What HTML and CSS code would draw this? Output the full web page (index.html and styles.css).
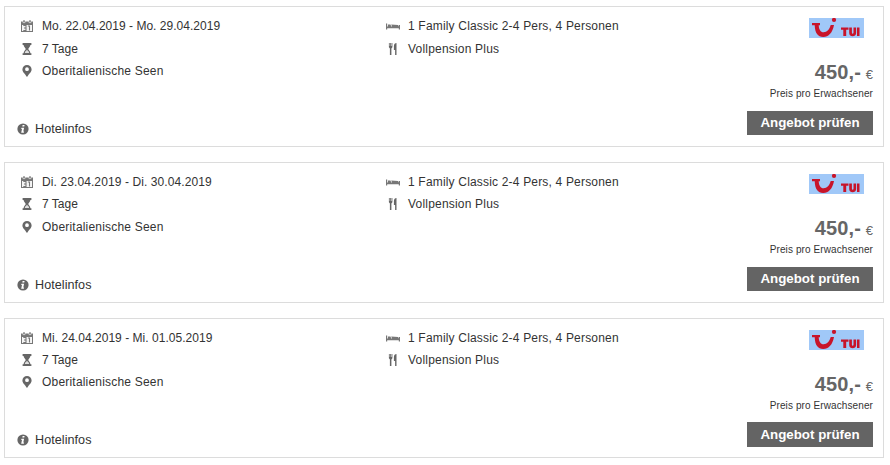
FILE: index.html
```html
<!DOCTYPE html>
<html lang="de">
<head>
<meta charset="utf-8">
<title>Angebote</title>
<link rel="stylesheet" href="styles.css">
</head>
<body>
<svg class="defs" width="0" height="0">
  <symbol id="calendar" viewBox="0 0 12 12"><path d="M0 1.500h12V12H0z" fill="#777"/><path d="M1 5h10v6H1z" fill="#f5f5f5"/><path d="M2 0h2v2.600H2zM8 0h2v2.600H8z" stroke="#fff" stroke-width=".6"/><path d="M2.300 5.500h2.700v5H2.300M3 8h2M6.900 6h1.600V10.500" fill="none" stroke="#777" stroke-width="1.100"/></symbol>
  <symbol id="hourglass" viewBox="0 0 10 12"><path d="M.6 0h8.800v2H.6zM.6 10.200h8.800V12H.6z"/><path d="M1.500 1.500h7C8.500 4 6.300 5 6.300 6S8.500 8 8.500 11h-7C1.500 8 3.700 7 3.700 6S1.500 4 1.500 1.500z"/><path d="M2.800 9.900C3 8.200 4.400 7.800 5 6.800c.6 1 2 1.400 2.200 3.100z" fill="#ddd"/></symbol>
  <symbol id="pin" viewBox="0 0 10 12"><path fill-rule="evenodd" d="M5 0a4.600 4.400 0 0 1 4.600 4.400C9.600 7 7 8.500 5 12 3 8.500.4 7 .4 4.400A4.600 4.400 0 0 1 5 0zm0 2.300a1.900 1.900 0 1 0 0 3.800 1.900 1.900 0 0 0 0-3.800z"/></symbol>
  <symbol id="bed" viewBox="0 0 14 7"><path d="M0 .5h1.200v2.900h11.600V2H14v4.500h-1.200V5.300H1.200v1.200H0zM2 1.500h2.500l.7 1.900H2zM5.200 1.500l6.800.4.700 1.500H6z" fill="#777"/></symbol>
  <symbol id="cutlery" viewBox="0 0 9 12"><path d="M.4 0h.8v3h.5V0h.8v3H3V0h.9v4.200L2.900 5.400V12H1.400V5.400L.4 4.200zM8 0v12H6.600V7H5.400V3C5.400 1 6.600 0 8 0z"/></symbol>
  <symbol id="info" viewBox="0 0 12 12"><circle cx="6" cy="6" r="5.600"/><path d="M5.600 2h2l-.3 1.500h-2zM4.500 4.700h2.600L6.300 8.500h.8l-.3 1.200H4.200L5 5.900h-.8z" fill="#fff"/></symbol>
  <symbol id="tui" viewBox="0 0 55 20"><path fill="#a0c8f8" d="M0 0h55v20H0z"/><g fill="#c8142a"><circle cx="25" cy="1.900" r="2.100"/><path d="M3 4.900h8v2.400H9.700c.2 4.300 1.800 7 4.900 7 3.500 0 5.900-2.800 7.100-3.700H25C23.600 14.800 19.700 19 14.200 19 8.900 19 6 15.200 5.700 7.300H3z" class="smile"/><path d="M32 9.500h7.500v2.300h-2.300V18h-2.900v-6.200H32zM40.200 9.500h2.700v5.200c0 1.400 1.600 1.400 1.600 0V9.500h2.600v5.400c0 4.400-6.900 4.400-6.900 0zM48 9.500h2.500V18H48z"/></g></symbol>
</svg>
<main class="offers">
  <article class="offer first">
    <section class="trip">
      <p class="row"><svg class="icon calendar"><use href="#calendar"/></svg><span class="date">Mo. 22.04.2019 - Mo. 29.04.2019</span></p>
      <p class="row"><svg class="icon"><use href="#hourglass"/></svg><span>7 Tage</span></p>
      <p class="row"><svg class="icon"><use href="#pin"/></svg><span class="place">Oberitalienische Seen</span></p>
      <a class="hotel"><svg class="info"><use href="#info"/></svg><span>Hotelinfos</span></a>
    </section>
    <section class="stay">
      <p class="row"><svg class="icon bed"><use href="#bed"/></svg><span class="room">1 Family Classic 2-4 Pers, 4 Personen</span></p>
      <p class="row"><svg class="icon"><use href="#cutlery"/></svg><span class="board">Vollpension Plus</span></p>
    </section>
    <section class="booking">
      <svg class="logo"><use href="#tui"/></svg>
      <p class="price"><b>450,-</b> <span>€</span></p>
      <p class="note">Preis pro Erwachsener</p>
      <a class="button"><span>Angebot prüfen</span></a>
    </section>
  </article>
  <article class="offer middle">
    <section class="trip">
      <p class="row"><svg class="icon calendar"><use href="#calendar"/></svg><span class="date">Di. 23.04.2019 - Di. 30.04.2019</span></p>
      <p class="row"><svg class="icon"><use href="#hourglass"/></svg><span>7 Tage</span></p>
      <p class="row"><svg class="icon"><use href="#pin"/></svg><span class="place">Oberitalienische Seen</span></p>
      <a class="hotel"><svg class="info"><use href="#info"/></svg><span>Hotelinfos</span></a>
    </section>
    <section class="stay">
      <p class="row"><svg class="icon bed"><use href="#bed"/></svg><span class="room">1 Family Classic 2-4 Pers, 4 Personen</span></p>
      <p class="row"><svg class="icon"><use href="#cutlery"/></svg><span class="board">Vollpension Plus</span></p>
    </section>
    <section class="booking">
      <svg class="logo"><use href="#tui"/></svg>
      <p class="price"><b>450,-</b> <span>€</span></p>
      <p class="note">Preis pro Erwachsener</p>
      <a class="button"><span>Angebot prüfen</span></a>
    </section>
  </article>
  <article class="offer last">
    <section class="trip">
      <p class="row"><svg class="icon calendar"><use href="#calendar"/></svg><span class="date">Mi. 24.04.2019 - Mi. 01.05.2019</span></p>
      <p class="row"><svg class="icon"><use href="#hourglass"/></svg><span>7 Tage</span></p>
      <p class="row"><svg class="icon"><use href="#pin"/></svg><span class="place">Oberitalienische Seen</span></p>
      <a class="hotel"><svg class="info"><use href="#info"/></svg><span>Hotelinfos</span></a>
    </section>
    <section class="stay">
      <p class="row"><svg class="icon bed"><use href="#bed"/></svg><span class="room">1 Family Classic 2-4 Pers, 4 Personen</span></p>
      <p class="row"><svg class="icon"><use href="#cutlery"/></svg><span class="board">Vollpension Plus</span></p>
    </section>
    <section class="booking">
      <svg class="logo"><use href="#tui"/></svg>
      <p class="price"><b>450,-</b> <span>€</span></p>
      <p class="note">Preis pro Erwachsener</p>
      <a class="button"><span>Angebot prüfen</span></a>
    </section>
  </article>
</main>
</body>
</html>
```
FILE: styles.css
```css
* { box-sizing: border-box; }
body { margin: 0; background: #fff; color: #333; font: 12px/22px "Liberation Sans", Arial, sans-serif; overflow: hidden; }
p { margin: 0; }
svg { display: block; fill: #666; flex: none; }
.defs { position: absolute; }
.smile { d: path("M3 4.900h8v2.400H9.700c.2 4.300 1.800 7 4.900 7 3.500 0 5.900-2.800 7.100-7.200H25C23.600 14.800 19.700 19 14.200 19 8.900 19 6 15.200 5.700 7.300H3z"); }
.offers { display: flex; flex-direction: column; gap: 15px; padding: 6px 6px 0 4px; }
.offer { display: grid; grid-template-columns: 364px 1fr 136px; height: 141px; border: 1px solid #dcdcdc; padding: 8px 10px 0 13px; }
.offer.last { height: 140px; }
.trip, .stay { display: flex; flex-direction: column; }
.row { display: flex; align-items: center; height: 22px; white-space: nowrap; }
.first .row:first-child { margin-bottom: 1px; }
.middle .row:nth-child(3) { margin-top: 1px; }
.icon { width: 10px; height: 12px; margin: 0 10px 0 4px; }
.calendar { width: 12px; margin: 0 9px 0 3px; }
.bed { width: 14px; height: 7px; margin: 0 8px 0 3px; }
.stay .row { padding-left: 1px; }
.stay .row + .row { padding-left: 2px; }
.date { letter-spacing: .02px; }
.middle .date { letter-spacing: .1px; }
.last .date { letter-spacing: .03px; }
.place { letter-spacing: .2px; }
.room { letter-spacing: .18px; }
.board { letter-spacing: .2px; }
.hotel { display: flex; align-items: center; gap: 6px; height: 22px; margin: auto 0 6px; font-size: 12.600px; letter-spacing: .05px; }
.info { width: 12px; height: 12px; margin: 0 -1px 0 -1px; }
.hotel span { margin-left: 1px; }
.booking { display: flex; flex-direction: column; align-items: flex-end; }
.logo { width: 55px; height: 20px; margin: 3px 9px 0 0; }
.price { height: 28px; margin-top: 20px; line-height: 28px; color: #666; white-space: nowrap; }
.price b { font-size: 20px; letter-spacing: .1px; }
.price span { font-size: 13px; margin-left: 1.500px; }
.note { height: 14px; margin-top: 1px; font-size: 10px; line-height: 14px; letter-spacing: .1px; white-space: nowrap; }
.button { display: flex; align-items: center; justify-content: center; width: 126px; height: 24px; margin-top: 10px; background: #646464; color: #fff; font-size: 13.333px; font-weight: bold; }
.last .button { height: 25px; margin-top: 9px; }
```
